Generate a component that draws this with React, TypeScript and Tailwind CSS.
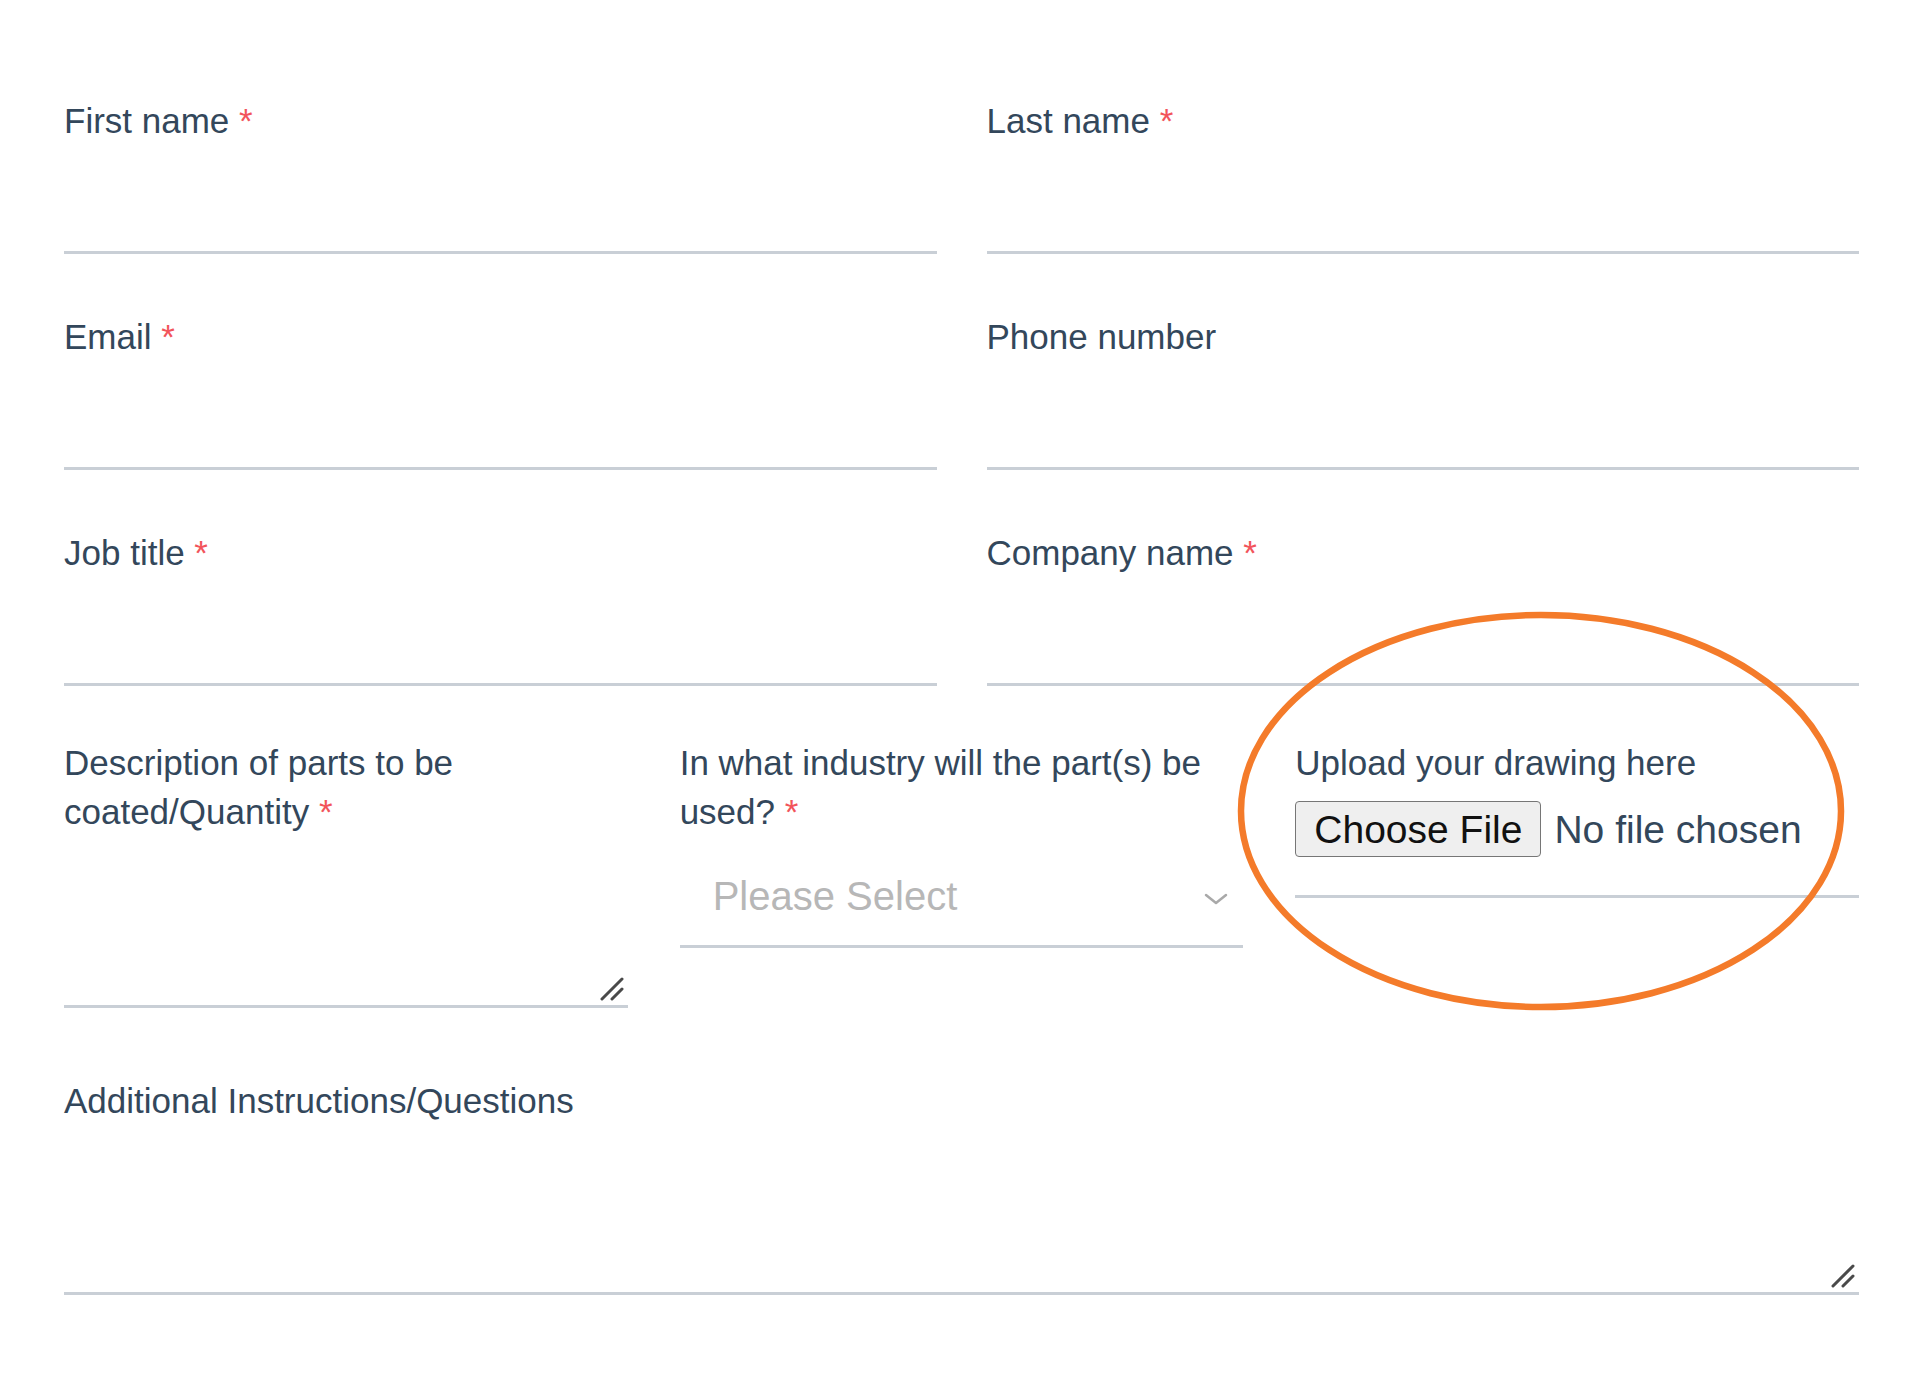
import React from "react";

const Req = () => <span className="text-[#f2545b]"> *</span>;

function Label({ text, req }: { text: string; req?: boolean }) {
  return (
    <div className="text-[35px] leading-[49px] text-[#33475b]">
      {text}
      {req && <Req />}
    </div>
  );
}

function Grip() {
  return (
    <svg
      className="absolute bottom-[4px] right-[4px]"
      width="24"
      height="24"
      viewBox="0 0 24 24"
    >
      <line x1="2" y1="22" x2="22" y2="2" stroke="#4a4a4a" strokeWidth="3" strokeLinecap="round" />
      <line x1="12" y1="22" x2="22" y2="12" stroke="#4a4a4a" strokeWidth="3" strokeLinecap="round" />
    </svg>
  );
}

function TextField({ label, req }: { label: string; req?: boolean }) {
  return (
    <div>
      <Label text={label} req={req} />
      <div className="h-[109px] border-b-[3px] border-[#c9cfd6]" />
    </div>
  );
}

export default function App() {
  return (
    <div className="relative min-h-[1385px] w-[1920px] bg-white font-['Liberation_Sans',Arial,sans-serif] text-[#33475b]">
      <div className="pl-[64px] pr-[61px] pt-[96px]">
        <div className="grid grid-cols-2 gap-x-[50px] gap-y-[58px]">
          <TextField label="First name" req />
          <TextField label="Last name" req />
          <TextField label="Email" req />
          <TextField label="Phone number" />
          <TextField label="Job title" req />
          <TextField label="Company name" req />
        </div>

        <div className="mt-[52px] grid grid-cols-3 items-start gap-x-[52px]">
          <div>
            <Label text="Description of parts to be coated/Quantity" req />
            <div className="relative h-[172px] border-b-[3px] border-[#c9cfd6]">
              <Grip />
            </div>
          </div>
          <div>
            <Label text="In what industry will the part(s) be used?" req />
            <div className="flex h-[112px] items-center justify-between border-b-[3px] border-[#c9cfd6] pl-[33px] pr-[15px] pt-[11px]">
              <span className="text-[40px] leading-[48px] text-[#b7b7b7]">Please Select</span>
              <svg className="mt-[6px]" width="24" height="12" viewBox="0 0 24 12">
                <polyline points="2,2 12,10 22,2" fill="none" stroke="#a9a9a9" strokeWidth="2.5" strokeLinecap="round" strokeLinejoin="round" />
              </svg>
            </div>
          </div>
          <div>
            <Label text="Upload your drawing here" />
            <div className="h-[111px] border-b-[3px] border-[#c9cfd6] pt-[14px]">
              <div className="flex items-center gap-[13px]">
                <div className="flex h-[56px] items-center rounded-[4px] border border-[#767676] bg-[#efefef] px-[18px] text-[39px] leading-none text-[#111111]">
                  Choose File
                </div>
                <span className="text-[39px] leading-none text-[#33475b]">No file chosen</span>
              </div>
            </div>
          </div>
        </div>

        <div className="mt-[68px]">
          <Label text="Additional Instructions/Questions" />
          <div className="relative h-[170px] border-b-[3px] border-[#c9cfd6]">
            <Grip />
          </div>
        </div>
      </div>

      <svg
        className="pointer-events-none absolute left-[1237px] top-[611px]"
        width="608"
        height="400"
        viewBox="0 0 608 400"
      >
        <ellipse cx="304" cy="200" rx="300" ry="196" fill="none" stroke="#f47b2a" strokeWidth="6.5" />
      </svg>
    </div>
  );
}
